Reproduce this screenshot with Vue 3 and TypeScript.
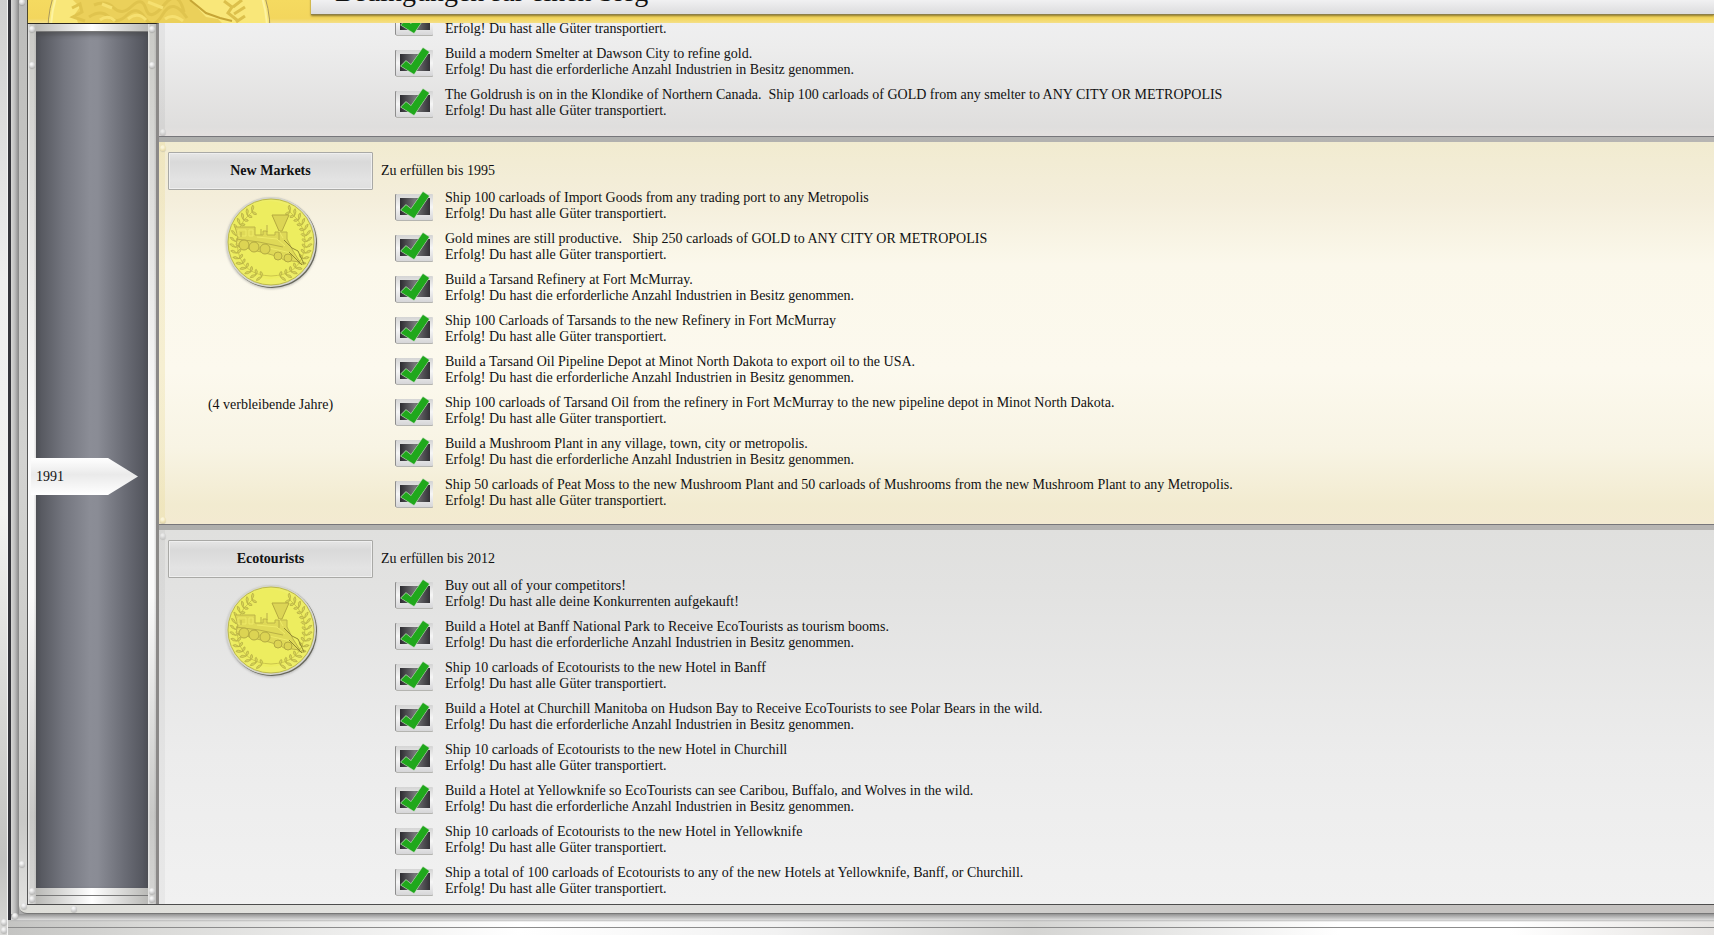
<script setup lang="ts">
interface Objective {
  title: string
  result: string
}
interface Goal {
  name: string
  due: string
  remaining?: string
  tone: 'past' | 'current' | 'future'
  objectives: Objective[]
}

const shipped = 'Erfolg! Du hast alle Güter transportiert.'
const owned = 'Erfolg! Du hast die erforderliche Anzahl Industrien in Besitz genommen.'
const year = 1991

const goals: Goal[] = [
  {
    name: '',
    due: '',
    tone: 'past',
    objectives: [
      { title: '', result: shipped },
      { title: 'Build a modern Smelter at Dawson City to refine gold.', result: owned },
      {
        title: 'The Goldrush is on in the Klondike of Northern Canada.  Ship 100 carloads of GOLD from any smelter to ANY CITY OR METROPOLIS',
        result: shipped,
      },
    ],
  },
  {
    name: 'New Markets',
    due: 'Zu erfüllen bis 1995',
    remaining: '(4 verbleibende Jahre)',
    tone: 'current',
    objectives: [
      { title: 'Ship 100 carloads of Import Goods from any trading port to any Metropolis', result: shipped },
      { title: 'Gold mines are still productive.   Ship 250 carloads of GOLD to ANY CITY OR METROPOLIS', result: shipped },
      { title: 'Build a Tarsand Refinery at Fort McMurray.', result: owned },
      { title: 'Ship 100 Carloads of Tarsands to the new Refinery in Fort McMurray', result: shipped },
      { title: 'Build a Tarsand Oil Pipeline Depot at Minot North Dakota to export oil to the USA.', result: owned },
      {
        title: 'Ship 100 carloads of Tarsand Oil from the refinery in Fort McMurray to the new pipeline depot in Minot North Dakota.',
        result: shipped,
      },
      { title: 'Build a Mushroom Plant in any village, town, city or metropolis.', result: owned },
      {
        title: 'Ship 50 carloads of Peat Moss to the new Mushroom Plant and 50 carloads of Mushrooms from the new Mushroom Plant to any Metropolis.',
        result: shipped,
      },
    ],
  },
  {
    name: 'Ecotourists',
    due: 'Zu erfüllen bis 2012',
    tone: 'future',
    objectives: [
      { title: 'Buy out all of your competitors!', result: 'Erfolg! Du hast alle deine Konkurrenten aufgekauft!' },
      { title: 'Build a Hotel at Banff National Park to Receive EcoTourists as tourism booms.', result: owned },
      { title: 'Ship 10 carloads of Ecotourists to the new Hotel in Banff', result: shipped },
      { title: 'Build a Hotel at Churchill Manitoba on Hudson Bay to Receive EcoTourists to see Polar Bears in the wild.', result: owned },
      { title: 'Ship 10 carloads of Ecotourists to the new Hotel in Churchill', result: shipped },
      { title: 'Build a Hotel at Yellowknife so EcoTourists can see Caribou, Buffalo, and Wolves in the wild.', result: owned },
      { title: 'Ship 10 carloads of Ecotourists to the new Hotel in Yellowknife', result: shipped },
      { title: 'Ship a total of 100 carloads of Ecotourists to any of the new Hotels at Yellowknife, Banff, or Churchill.', result: shipped },
    ],
  },
]

// Laurel leaves: position and direction along both branches of the medal.
const leaves = Array.from({ length: 15 }, (_, i) => {
  const angle = -58 + i * 9.5
  const rad = (angle * Math.PI) / 180
  return { x: 36 * Math.cos(rad), y: 36 * Math.sin(rad), angle }
})
</script>

<template>
  <div class="window">
    <div class="outer-rail">
      <span class="screw rail-screw-a"></span>
      <span class="screw rail-screw-b"></span>
    </div>
    <div class="groove"></div>
    <div class="bevel">
      <span class="screw bevel-screw"></span>
      <div class="frame">
        <span class="screw frame-screw-top"></span>
        <span class="screw frame-screw-side"></span>
        <span class="screw frame-screw-corner"></span>
        <span class="screw frame-screw-bottom"></span>
        <header class="banner">
          <svg class="banner-medal" viewBox="0 0 240 23" width="240" height="23" aria-hidden="true">
            <circle cx="119" cy="30" r="111" fill="#f9e779" stroke="#a9975c" stroke-width="1" />
            <circle cx="119" cy="30" r="108" fill="none" stroke="#fdf3a0" stroke-width="2" />
            <path d="M33 0 40 7 35 14 38 23H182L178 19 166 17 150 0Z" fill="#ebd05a" />
            <path d="M32 8l8-4 2 8-9 5 12 4M54 5q12-5 20 3t18-2 14 3 18-4 20 7M49 17q12-8 20 0t18-2 18 3 18-4 24 4" fill="none" stroke="#e0c44e" stroke-width="3" />
            <path d="M60 20q8-6 15 1M88 19q10-8 18 1M125 19q8-6 18 2M62 4l10 4M108 2l15 6" fill="none" stroke="#f6e070" stroke-width="3" />
            <path d="M150 0 166 13 180 18 192 21" fill="none" stroke="#c6a535" stroke-width="2" />
            <path d="M184 1l8 6-4 6 9 7M202 0l-9 7M205 7l-11 7M205 16l-9 6" fill="none" stroke="#dcc04c" stroke-width="3" />
          </svg>
          <h1>Bedingungen für einen Sieg</h1>
        </header>
        <main class="body">
          <aside class="timeline">
            <div class="post">
              <span class="screw post-top"></span>
              <span class="screw post-upper"></span>
              <span class="screw post-lower"></span>
              <span class="screw post-bottom"></span>
            </div>
            <div class="track">
              <div class="cap"></div>
              <div class="slate"></div>
              <div class="cap"></div>
              <div class="cap"></div>
            </div>
            <div class="post">
              <span class="screw post-top"></span>
              <span class="screw post-upper"></span>
              <span class="screw post-lower"></span>
              <span class="screw post-bottom"></span>
            </div>
            <div class="marker"><time>{{ year }}</time></div>
          </aside>
          <div class="goals">
            <section v-for="goal in goals" :key="goal.name" class="goal" :class="goal.tone">
              <span v-if="goal.tone !== 'past'" class="screw goal-top"></span>
              <span v-if="goal.tone !== 'future'" class="screw goal-bottom"></span>
              <div class="summary">
                <template v-if="goal.name">
                  <button type="button" class="plate">{{ goal.name }}</button>
                  <svg class="medal" viewBox="-50 -50 100 100" width="100" height="100" aria-hidden="true">
                    <circle cx="1" cy="1" r="45" fill="#66665c" />
                    <circle r="45" fill="#d5d5cd" />
                    <circle r="43" fill="#eeee68" stroke="#bcb94c" stroke-width="1" />
                    <circle cx="-2" cy="-2" r="39" fill="#eded5f" />
                    <g v-for="side in [1, -1]" :key="side" :transform="`scale(${side} 1)`">
                      <path d="M19-30Q38-15 33 9T0 34" fill="none" stroke="#ccc64b" stroke-width="1" />
                      <path
                        v-for="leaf in leaves"
                        :key="leaf.angle"
                        d="M0 0Q2-5 5-4 4-1 0 0Q-4-4-5-2-4 1 0 0"
                        :transform="`translate(${leaf.x} ${leaf.y}) rotate(${leaf.angle})`"
                        fill="#d9d557"
                        stroke="#b5ae44"
                        stroke-width="0.7"
                      />
                    </g>
                    <path d="M1-27H18L11-11H8Z" fill="#dcd555" stroke="#b5aa40" stroke-width="1" />
                    <path
                      d="M-36-15H-16V-7H-8V-11H-4V-7H4V-10H16V-3L22 9 29 20 13 18 8 15-2 12-18 8-35 3-33-5Z"
                      fill="#dfd957"
                      stroke="#bdb448"
                      stroke-width="1"
                    />
                    <path d="M-33-12H-25V-6H-33ZM-22-12H-18V-6H-22ZM-14-5 6-3 14 4M-34 0-12 4 7 8 20 11M-4-18V-11M-8-14H-2M8-11 12-4" fill="none" stroke="#eeea68" stroke-width="1" />
                    <path d="M-35-3-12 0 12 5M-4-17V-10M-10-13V-7M8-10V-2M-30-10V-5" fill="none" stroke="#b9b046" stroke-width="1" />
                    <g fill="#dcd453" stroke="#b3aa42" stroke-width="1">
                      <circle cx="-27" cy="3" r="5" />
                      <circle cx="-17" cy="5" r="5" />
                      <circle cx="-6" cy="7" r="5" />
                      <circle cx="7" cy="14" r="4" />
                      <circle cx="17" cy="16" r="4" />
                    </g>
                    <path d="M13-2 21 6 27 9 33 22M18 10 31 23" fill="none" stroke="#918a32" stroke-width="1" />
                  </svg>
                  <p v-if="goal.remaining" class="remaining">{{ goal.remaining }}</p>
                </template>
              </div>
              <div class="details">
                <p v-if="goal.due" class="due">{{ goal.due }}</p>
                <ul class="objectives">
                  <li v-for="(item, i) in goal.objectives" :key="i">
                    <svg class="tick" viewBox="0 0 40 32" width="40" height="32" role="img" aria-label="Erfüllt">
                      <defs>
                        <linearGradient :id="`p${goal.tone}${i}`" x2="0" y2="1">
                          <stop stop-color="#d4d4d4" />
                          <stop offset=".5" stop-color="#f6f6f6" />
                          <stop offset="1" stop-color="#d6d6d8" />
                        </linearGradient>
                        <linearGradient :id="`s${goal.tone}${i}`">
                          <stop stop-color="#2c2b30" />
                          <stop offset=".5" stop-color="#77777a" />
                          <stop offset="1" stop-color="#333236" />
                        </linearGradient>
                      </defs>
                      <rect x="2" y="5" width="37" height="26" rx="1" fill="#b4b4b0" />
                      <rect x="1" y="4" width="37" height="26" rx="1" fill="#8d8d8d" />
                      <rect x="2" y="4" width="37" height="26" rx="1" :fill="`url(#p${goal.tone}${i})`" />
                      <rect x="6" y="8" width="30" height="17" :fill="`url(#s${goal.tone}${i})`" />
                      <path d="M7 20 12 15 17 19 29 2 35 6 20 28Z" fill="#20a81c" stroke="#b4d4b0" stroke-width="1.2" stroke-linejoin="round" />
                      <path d="M7 20 12 15 17 19 29 2 35 6 20 28Z" fill="#20a81c" />
                    </svg>
                    <div class="lines">
                      <p>{{ item.title }}</p>
                      <p>{{ item.result }}</p>
                    </div>
                  </li>
                </ul>
              </div>
            </section>
          </div>
        </main>
      </div>
    </div>
    <div class="base"></div>
  </div>
</template>

<style>
body {
  margin: 0;
}
</style>

<style scoped>
.window {
  display: grid;
  grid-template-columns: 8px 3px minmax(0, 1fr);
  grid-template-rows: 1fr 15px;
  min-height: 100vh;
  color: #111;
  font: 14px/16px "Liberation Serif", "Times New Roman", serif;
}
p,
h1,
ul {
  margin: 0;
  padding: 0;
}
.screw {
  position: absolute;
  box-sizing: border-box;
  width: 6px;
  height: 6px;
  border-radius: 50%;
  background: radial-gradient(circle at 40% 35%, #f4f4f4 0 15%, #d6d6d6 50%, #aaa);
  box-shadow: 0 1px 1px #8886;
}
.outer-rail {
  position: relative;
  grid-row: 1 / 3;
  box-sizing: border-box;
  border-right: 1px solid #f4f4f4;
  background: linear-gradient(#cfcfcf, #eee 30%, #f2f2f0 55%, #c2c2c0 92%, #d8d8d6);
}
.rail-screw-a {
  left: 1px;
  bottom: 10px;
}
.rail-screw-b {
  left: 1px;
  bottom: 2px;
}
.groove {
  background: #34343a;
}
.base {
  grid-column: 2 / 4;
  background:
    linear-gradient(#bbb, #0000) top / 100% 2px no-repeat,
    linear-gradient(#8c8c8c, #8c8c8c) 0 7px / 100% 1px no-repeat,
    linear-gradient(90deg, #c4c4c2, #d9d9d7 8%, #fff 30%, #f2f2f2 45%, #d4d4d2 60%, #fff 78%, #fff 88%, #e6e4e2);
}
.bevel {
  position: relative;
  display: flex;
  padding: 0 0 6px 8px;
  background:
    linear-gradient(#929292, #b9b9b9 50%, #dedede) bottom / 100% 6px no-repeat,
    linear-gradient(90deg, #d8d8d6, #bbb 50%, #858585) left / 8px 100% no-repeat,
    #aaa;
}
.bevel-screw {
  left: 1px;
  bottom: 1px;
}
.frame {
  position: relative;
  display: flex;
  flex: 1;
  flex-direction: column;
  min-width: 0;
  padding: 0 0 8px 8px;
  border-bottom: 1px solid #777;
  border-bottom-left-radius: 8px;
  background:
    linear-gradient(90deg, #deded9, #e4e4e2 35%, #c5c3c1 75%, #c2bfbd) bottom / 100% 8px no-repeat,
    linear-gradient(#bcbcba, #d2d2d0 50%, #c9c9c7 90%, #e3e3e1);
}
.frame-screw-top {
  left: 0;
  top: -1px;
}
.frame-screw-side {
  left: 0;
  bottom: 46px;
}
.frame-screw-corner {
  left: 2px;
  bottom: 4px;
}
.frame-screw-bottom {
  left: 52px;
  bottom: 1px;
}
.banner {
  display: flex;
  height: 23px;
  overflow: hidden;
  border-left: 1px solid #4d482e;
  background: linear-gradient(#f5da60, #f3d65d 80%, #f4df88);
}
.banner-medal {
  flex: none;
  margin-left: 12px;
}
h1 {
  flex: 1;
  box-sizing: border-box;
  height: 55px;
  margin: -40px 0 0 31px;
  padding: 16px 0 0 24px;
  border-bottom: 1px solid #8d7f48;
  background: linear-gradient(#f4f4f5 70%, #dcdcde);
  box-shadow: 0 1px 2px #8a7429;
  font-size: 28px;
  font-weight: 400;
  line-height: 32px;
  white-space: nowrap;
}
.body {
  display: grid;
  flex: 1;
  grid-template-columns: 132px minmax(0, 1fr);
  border-bottom: 1px solid #4d4d4d;
}
.timeline {
  position: relative;
  display: grid;
  box-sizing: border-box;
  grid-template-columns: 8px 1fr 8px;
  border-top: 1px solid #2a2720;
  border-left: 1px solid #555;
  border-right: 3px solid #8b8988;
}
.post {
  position: relative;
  background:
    linear-gradient(90deg, #fff8, #fff0 30% 70%, #8884),
    linear-gradient(#c9c9c5, #dededc 20%, #fafafa 45% 65%, #c8c8c6 90%, #d5d5d3);
}
.post .screw {
  left: 1px;
}
.post-top {
  top: 2px;
}
.post-upper {
  top: 38px;
}
.post-lower {
  bottom: 10px;
}
.post-bottom {
  bottom: 2px;
}
.track {
  display: flex;
  flex-direction: column;
}
.cap {
  box-sizing: border-box;
  height: 8px;
  border-bottom: 1px solid #777;
  background: linear-gradient(90deg, #b9b9b6, #fff 50%, #b9b9b6);
}
.cap:last-child {
  border-bottom: 0;
}
.slate {
  flex: 1;
  background: linear-gradient(90deg, #51535a, #74767f 25%, #8b8d96 48%, #8a8c95 55%, #696b74 80%, #50525a);
  box-shadow: inset 0 3px 4px #4448;
}
.marker {
  position: absolute;
  top: 434px;
  left: 3px;
  box-sizing: border-box;
  width: 107px;
  height: 37px;
  padding: 11px 0 0 5px;
  clip-path: polygon(0 0, 72% 0, 100% 50%, 72% 100%, 0 100%);
  background: linear-gradient(#fff, #eaeaea 45%, #fff);
}
.goals {
  display: flex;
  flex-direction: column;
  gap: 5px;
  background: linear-gradient(90deg, #aeaeac, #b7b5b3);
}
.goal {
  position: relative;
  display: grid;
  grid-template-columns: 205px minmax(0, 1fr);
  column-gap: 8px;
  padding: 10px 0 6px 9px;
  border-bottom: 1px solid #77767a;
}
.past {
  box-sizing: border-box;
  height: 114px;
  padding: 0 0 8px 9px;
  overflow: hidden;
  align-content: end;
  background:
    linear-gradient(90deg, #0000000c 6px, #0000 6px),
    linear-gradient(#efeff0, #ededed 20%, #dfdedd 92%, #e4e0df);
}
.current {
  background:
    linear-gradient(90deg, #eadb9a55 6px, #0000 6px),
    linear-gradient(#f1ebd0, #f4eedb 15%, #fbf8eb 32%, #fcf9ee 60%, #f8f4e4 80%, #f2ebd0 95%, #f3ead1);
}
.future {
  flex: 1;
  padding-bottom: 0;
  border-bottom: 0;
  background:
    linear-gradient(90deg, #0000000a 6px, #0000 6px),
    linear-gradient(#e0e0de, #e2e2e1 15%, #ececec 60%, #f1f1f1);
}
.goal-top,
.goal-bottom {
  left: 1px;
  opacity: 0.7;
}
.goal-top {
  top: 3px;
}
.goal-bottom {
  bottom: 1px;
}
.current .screw {
  background: radial-gradient(circle at 40% 35%, #fffbe6 0 20%, #efe3b4 55%, #cfc088);
}
.summary {
  display: flex;
  flex-direction: column;
  align-items: center;
}
.plate {
  width: 100%;
  height: 38px;
  border: 1px solid #a9a9a6;
  border-radius: 1px;
  background: linear-gradient(#e6e6e6, #d9d9d9 25%, #e3e3e3 75%, #dfdfdf);
  box-shadow: inset 0 0 0 1px #efefef;
  color: #111;
  font: bold 14px/16px "Liberation Serif", "Times New Roman", serif;
}
.medal {
  margin-top: 2px;
  filter: drop-shadow(0 1px 1px #8888);
}
.remaining {
  margin-top: 105px;
}
.due {
  height: 27px;
  padding-top: 11px;
}
.objectives {
  list-style: none;
}
li {
  display: flex;
  gap: 11px;
  height: 32px;
  margin-left: 13px;
  padding-bottom: 9px;
}
.future li:last-child {
  padding-bottom: 0;
}
.tick {
  flex: none;
}
.lines p {
  min-height: 16px;
  white-space: pre;
}
</style>
